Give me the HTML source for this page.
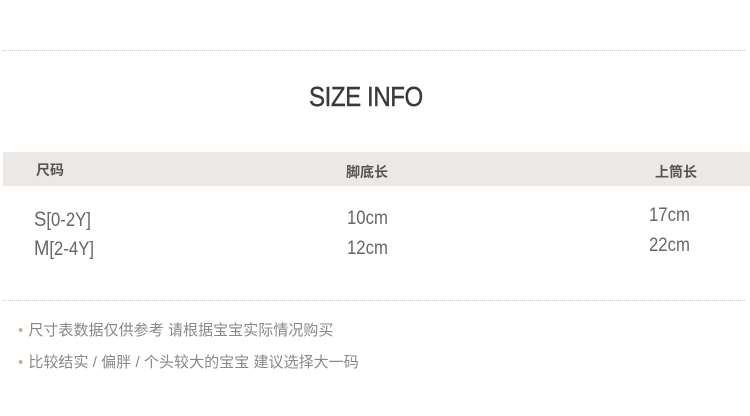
<!DOCTYPE html>
<html><head><meta charset="utf-8"><style>
body{margin:0;width:750px;height:416px;background:#fff;position:relative;overflow:hidden;font-family:"Liberation Sans","Noto Sans CJK SC",sans-serif}
.a{position:absolute;white-space:nowrap}
.dot{position:absolute;left:3px;width:742px;border-top:1px dotted #c8c8c8;height:0}
.t{font-size:28px;color:#3a3a3a;transform:scaleX(.86);transform-origin:0 0;left:309px;top:81px;letter-spacing:-0.5px;-webkit-text-stroke:0.4px #3a3a3a}
.band{position:absolute;left:3px;top:152px;width:747px;height:34px;background:#ece8e5}
.h{font-size:14px;font-weight:bold;color:#555}
.d{font-size:19px;color:#666;transform:scaleX(.88);transform-origin:0 0}
.n{font-size:15px;color:#888;left:18px;letter-spacing:0.05px}
.n b{color:#cfa892;font-weight:normal;margin-right:5px}
</style></head><body>
<div class="dot" style="top:50px"></div>
<div class="a t">SIZE INFO</div>
<div class="band"></div>
<div class="a h" style="left:36px;top:160px">尺码</div>
<div class="a h" style="left:346px;top:162px">脚底长</div>
<div class="a h" style="left:655px;top:162px">上筒长</div>
<div class="a d" style="left:34px;top:208px"><span style="font-size:21px">S</span>[0-2Y]</div>
<div class="a d" style="left:34px;top:237px"><span style="font-size:21px">M</span>[2-4Y]</div>
<div class="a d" style="left:347px;top:208px">10cm</div>
<div class="a d" style="left:347px;top:238px">12cm</div>
<div class="a d" style="left:649px;top:205px">17cm</div>
<div class="a d" style="left:649px;top:235px">22cm</div>
<div class="dot" style="top:300px"></div>
<div class="a n" style="top:319px"><b>•</b>尺寸表数据仅供参考 请根据宝宝实际情况购买</div>
<div class="a n" style="top:351px"><b>•</b>比较结实 / 偏胖 / 个头较大的宝宝 建议选择大一码</div>
</body></html>
